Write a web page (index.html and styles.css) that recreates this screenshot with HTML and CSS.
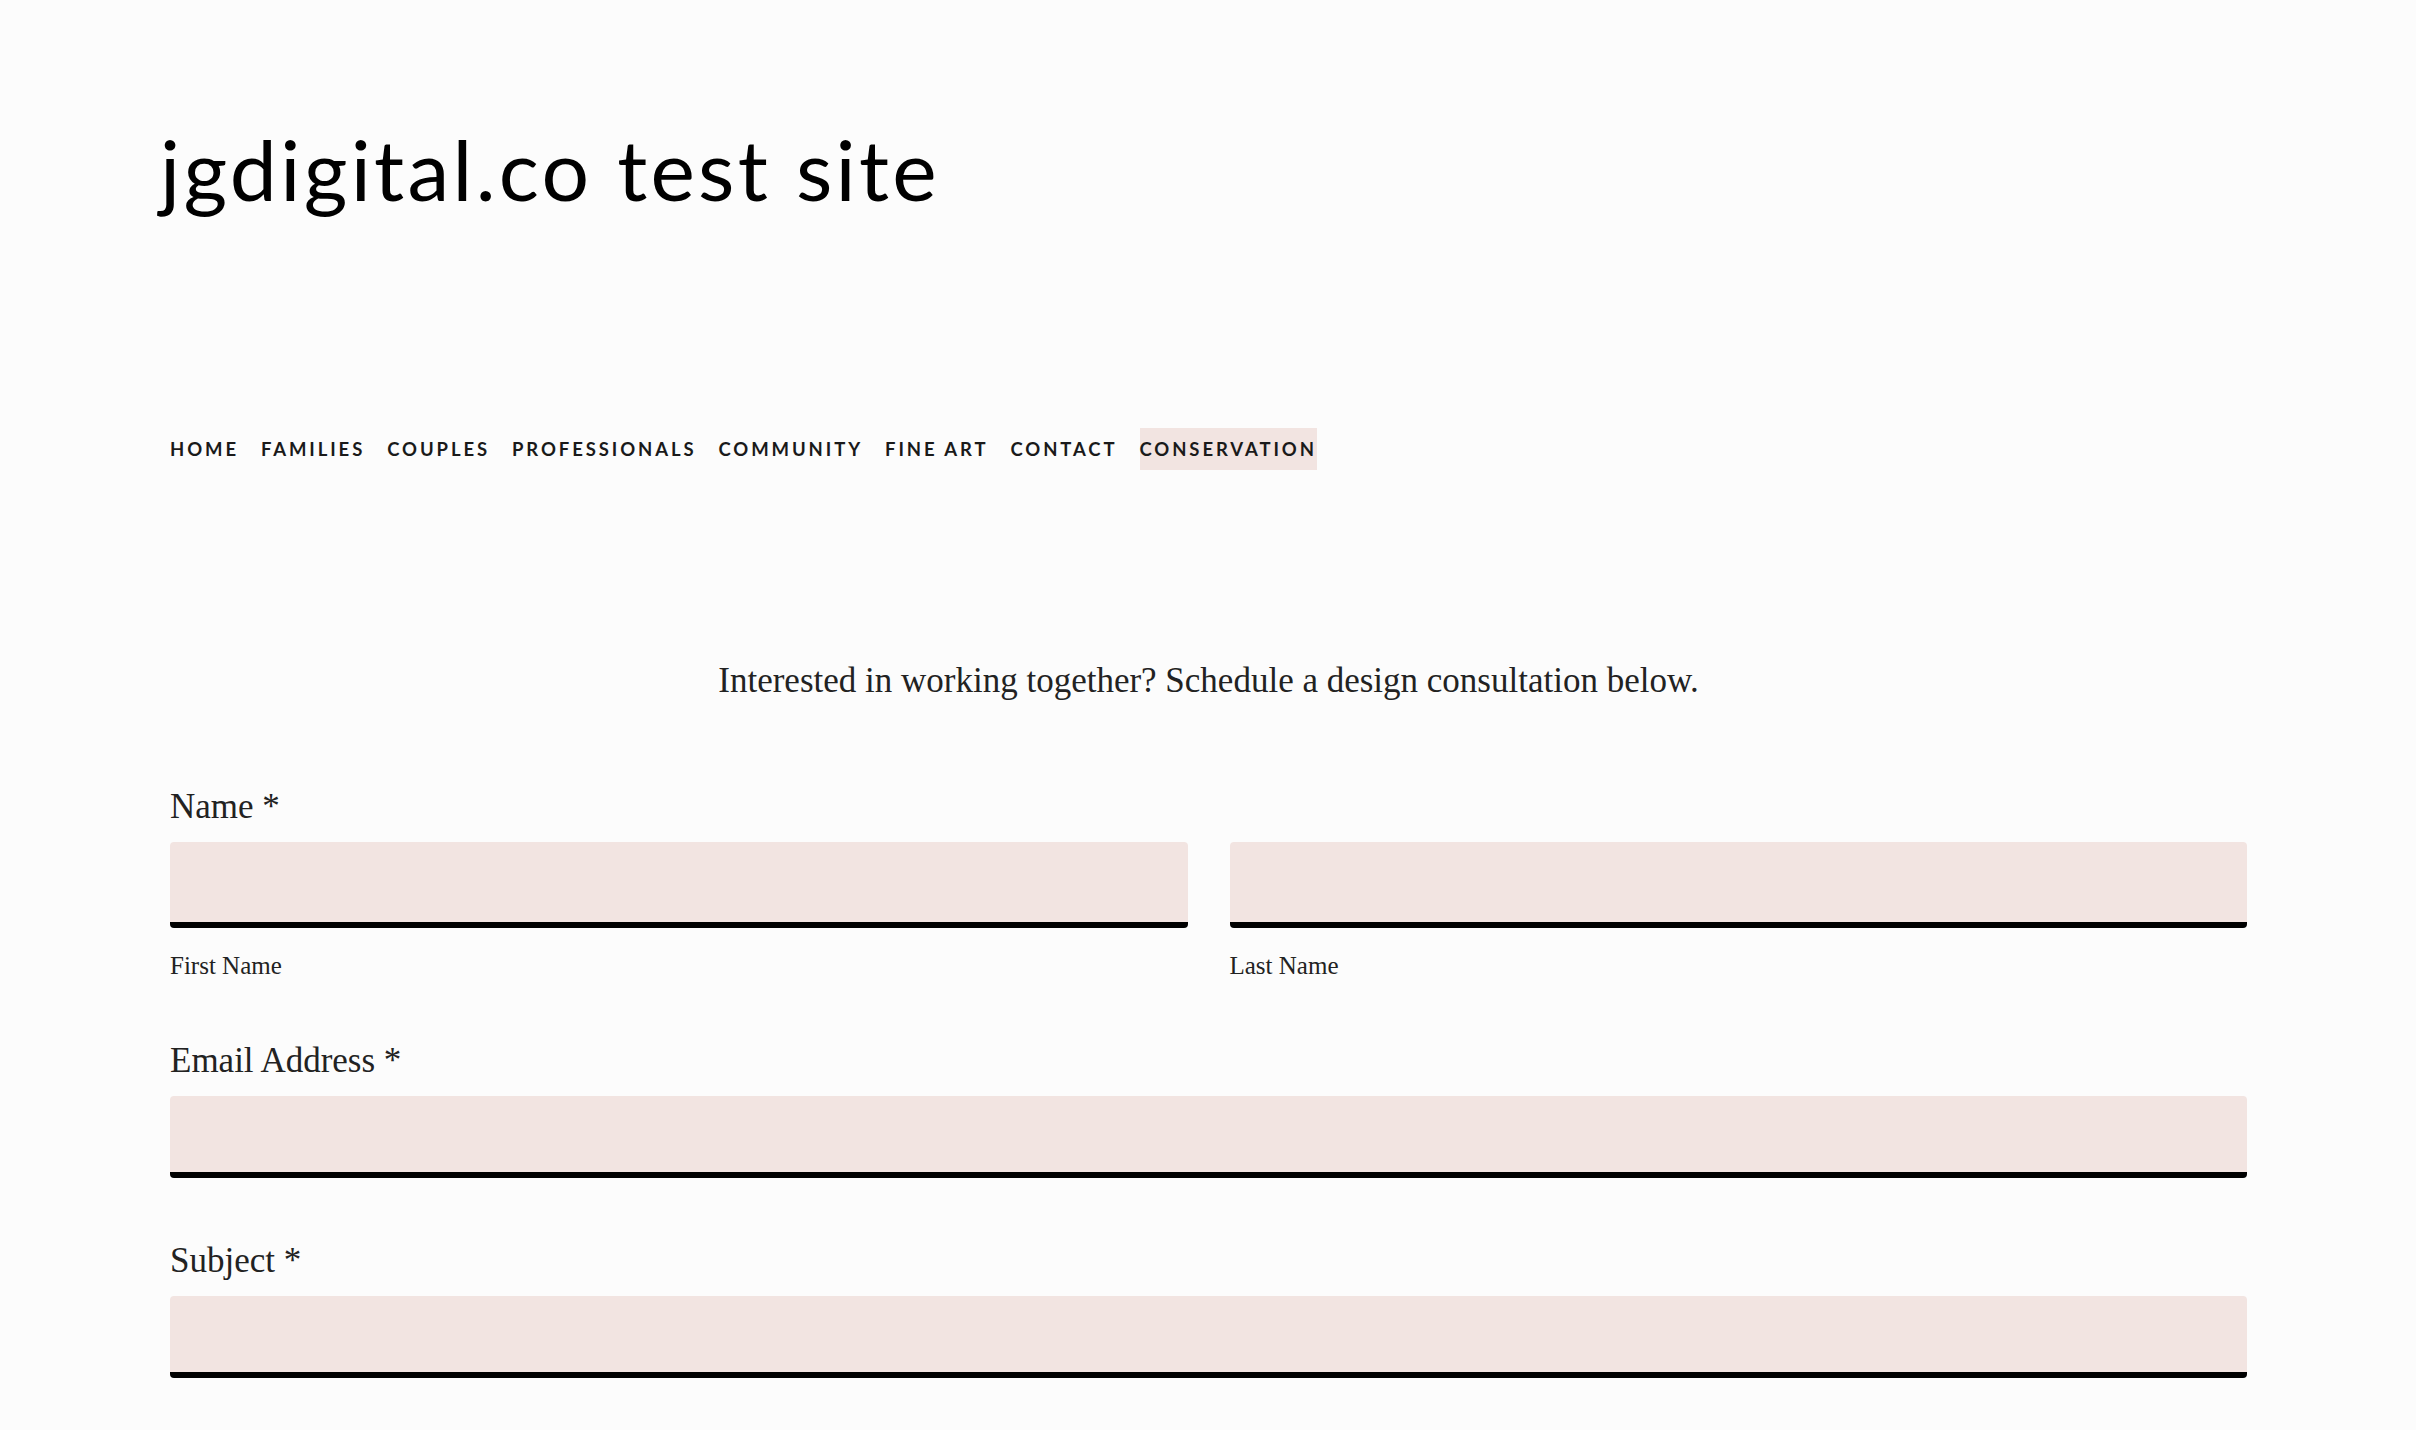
FILE: index.html
```html
<!DOCTYPE html>
<html lang="en">
<head>
<meta charset="utf-8">
<title>Contact — jgdigital.co test site</title>
<link rel="stylesheet" href="styles.css">
</head>
<body>
<header class="site-header">
  <h1 class="site-title">jgdigital.co test site</h1>
  <nav class="main-nav">
    <a href="#">Home</a>
    <a href="#">Families</a>
    <a href="#">Couples</a>
    <a href="#">Professionals</a>
    <a href="#">Community</a>
    <a href="#">Fine Art</a>
    <a href="#">Contact</a>
    <a href="#" class="active">Conservation</a>
  </nav>
</header>
<main class="content">
  <p class="intro">Interested in working together? Schedule a design consultation below.</p>
  <form class="contact-form">
    <div class="field field-name">
      <div class="field-label">Name *</div>
      <div class="name-row">
        <div class="sub-field">
          <input type="text" class="text-input text-input-tall">
          <label class="sub-label">First Name</label>
        </div>
        <div class="sub-field">
          <input type="text" class="text-input text-input-tall">
          <label class="sub-label">Last Name</label>
        </div>
      </div>
    </div>
    <div class="field">
      <label class="field-label">Email Address *</label>
      <input type="email" class="text-input">
    </div>
    <div class="field">
      <label class="field-label">Subject *</label>
      <input type="text" class="text-input">
    </div>
  </form>
</main>
</body>
</html>
```
FILE: styles.css
```css
* { box-sizing: border-box; }
html, body { margin: 0; padding: 0; }
body {
  background: #fcfcfc;
  color: #222;
  font-family: "Liberation Serif", "Times New Roman", serif;
  width: 2416px;
  height: 1430px;
  overflow: hidden;
}
.site-header {
  padding: 119px 170px 0 170px;
}
.site-title {
  margin: 0 0 0 -10px;
  font-family: "Lato", "Open Sans", sans-serif;
  font-weight: 400;
  font-size: 84px;
  line-height: 100px;
  letter-spacing: 3.3px;
  color: #000;
}
.main-nav {
  display: flex;
  gap: 22px;
  margin-top: 209px;
  align-items: center;
}
.main-nav a {
  font-family: "Lato", "Open Sans", sans-serif;
  font-size: 18.5px;
  font-weight: 700;
  letter-spacing: 2.9px;
  text-transform: uppercase;
  color: #1a1a1a;
  text-decoration: none;
  padding: 10px 0;
  line-height: 22px;
}
.main-nav a.active {
  background: #f2e4e1;
}
.content {
  padding: 0 169px 0 170px;
}
.intro {
  text-align: center;
  font-size: 35px;
  line-height: 44px;
  margin: 189px 0 0 0;
}
.contact-form {
  margin-top: 83px;
}
.field {
  margin-bottom: 62px;
}
.field.field-name {
  margin-bottom: 59px;
}
.field-label {
  display: block;
  font-size: 35px;
  line-height: 42px;
  margin-bottom: 14px;
}
.name-row {
  display: grid;
  grid-template-columns: 1fr 1fr;
  gap: 42px;
}
.text-input {
  display: block;
  width: 100%;
  height: 82px;
  border: none;
  border-bottom: 6px solid #000;
  border-radius: 4px;
  background: #f2e4e1;
  padding: 0 20px;
  font: inherit;
  outline: none;
}
.text-input-tall {
  height: 86px;
}
.sub-label {
  display: block;
  font-size: 25px;
  line-height: 30px;
  margin-top: 23px;
}
```
